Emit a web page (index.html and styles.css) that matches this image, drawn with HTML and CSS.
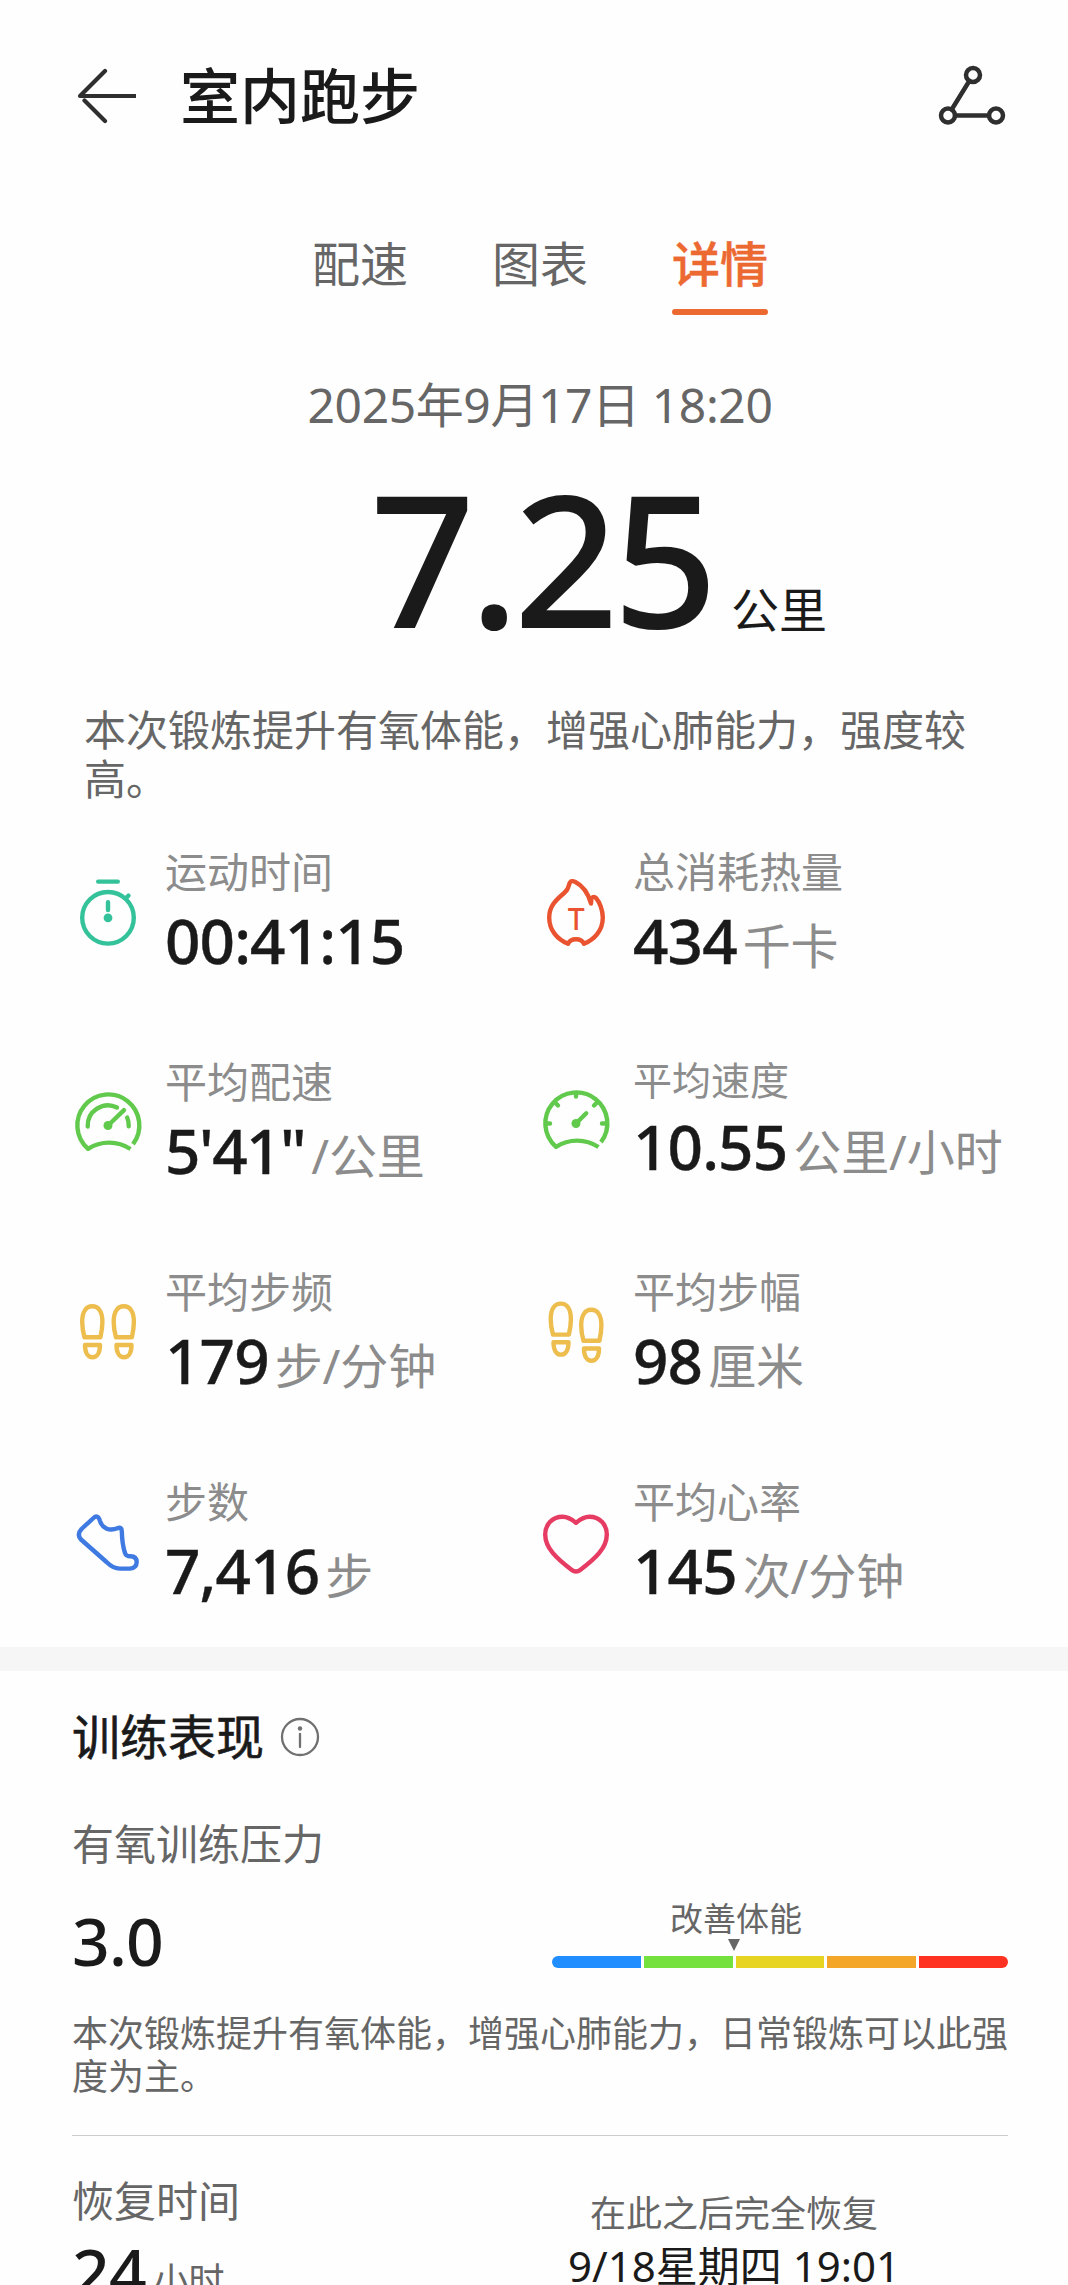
FILE: index.html
```html
<!DOCTYPE html>
<html lang="zh-CN">
<head>
  <meta charset="UTF-8" />
  <meta name="viewport" content="width=device-width, initial-scale=1.0" />
  <title>室内跑步</title>
  <link rel="stylesheet" href="styles.css">
</head>
<body>

  <!-- Header -->
  <header class="header">
    <svg class="back" viewBox="0 0 64 64"><path d="M33 7 8.500 31.500M8 32H63M12.500 36.500 33 57" /></svg>
    <h1 class="title">室内跑步</h1>
    <svg class="share" viewBox="0 0 72 72">
      <circle cx="37" cy="15" r="7" /><circle cx="12" cy="55.500" r="7" /><circle cx="60" cy="55.500" r="7" />
      <path d="M33.300 21 15.700 49.500M19 55.500H53" />
    </svg>
  </header>

  <nav class="tabs">
    <div class="tab">配速</div>
    <div class="tab">图表</div>
    <div class="tab active">详情</div>
  </nav>

  <!-- Summary -->
  <div class="date">2025年9月17日 18:20</div>
  <div class="distance">
    <span class="distance-num">7.25</span>
    <span class="distance-unit">公里</span>
  </div>
  <p class="summary">本次锻炼提升有氧体能，增强心肺能力，强度较高。</p>

  <!-- Stats -->
  <div class="stats">
    <div class="stat">
      <svg class="icon teal" viewBox="0 0 72 72">
        <circle cx="36" cy="41.800" r="25.800" />
        <path d="M26.200 5.600H45.800M54 22 56.500 19.700M36 26.200V34" />
        <circle class="fill" cx="36" cy="41.800" r="4.400" />
      </svg>
      <div>
        <div class="label">运动时间</div>
        <div class="value">00:41:15</div>
      </div>
    </div>
    <div class="stat">
      <svg class="icon red" viewBox="0 0 72 72">
        <path d="M31.700 5.200C28.800 5.800 29.500 9.500 27.200 13.500C23.500 19.500 9.200 25.500 9.200 41.500C9.200 54.500 17.500 63.500 28 67.800C29.500 64.500 32 63.200 36 63.200S42.500 64.500 44 67.800C54.500 63.500 62.800 54.500 62.800 41.500C62.800 34 59.500 26 56 22C54.200 20 51.500 20.800 51.300 23.500L51 27.500C48.500 18.500 43.500 10 35 5.800Q33.200 4.800 31.700 5.200Z" />
        <text x="36.300" y="53.500">T</text>
      </svg>
      <div>
        <div class="label">总消耗热量</div>
        <div class="value">434<span class="unit">千卡</span></div>
      </div>
    </div>
    <div class="stat">
      <svg class="icon green" viewBox="0 0 72 72">
        <path class="flat" d="M61 58.200A31 31 0 1 0 16 62.800A39 39 0 0 1 58.500 63" />
        <path d="M15.700 40.500A20.300 20.300 0 0 1 45 21.500M36 39.500 52 24.200M55.200 31.500Q56.700 35 56.700 40.200" />
        <circle class="fill" cx="36" cy="39.500" r="4.500" />
      </svg>
      <div>
        <div class="label">平均配速</div>
        <div class="value pace">5'41"<span class="unit">/公里</span></div>
      </div>
    </div>
    <div class="stat">
      <svg class="icon green" viewBox="0 0 72 72">
        <path class="flat" d="M61 58.200A31 31 0 1 0 16 62.800A39 39 0 0 1 58.500 63" />
        <path d="M6 39.500H10M62 39.500H66M36 10V12.500M16 19.500 18 21.500M56 19.500 54 21.500M36 39.500 46.200 29.300" />
        <circle class="fill" cx="36" cy="39.500" r="4.500" />
      </svg>
      <div>
        <div class="label small">平均速度</div>
        <div class="value">10.55<span class="unit">公里/小时</span></div>
      </div>
    </div>
    <div class="stat">
      <svg class="icon yellow" viewBox="0 0 72 72">
        <g id="shoe">
          <path d="M12.500 41.300C11 36 10.200 31 10.200 26C10.200 16 14 10.300 20.300 10.300S30.400 16 30.400 26C30.400 31 29.600 36 28.400 41.300Z" />
          <path d="M13 49H28C28 57 25 61.300 20.500 61.300S13 57 13 49Z" />
        </g>
        <use href="#shoe" x="31.500" />
      </svg>
      <div>
        <div class="label">平均步频</div>
        <div class="value">179<span class="unit">步/分钟</span></div>
      </div>
    </div>
    <div class="stat">
      <svg class="icon yellow" viewBox="0 0 72 72">
        <use href="#shoe" x="0.500" y="-2.700" />
        <use href="#shoe" x="31" y="3.500" />
      </svg>
      <div>
        <div class="label">平均步幅</div>
        <div class="value">98<span class="unit">厘米</span></div>
      </div>
    </div>
    <div class="stat">
      <svg class="icon blue" viewBox="0 0 72 72">
        <path d="M21.500 12 9.500 23Q4.500 28.500 9 33.500L34.500 56Q41 62.500 48 62.600H58Q64.500 62 64.700 56Q64.500 50.500 58.500 50.300C55.500 50.300 54 50 53 47C51 41 50 34 49.800 25C49.700 22 48.500 21.200 45.500 22.200C37 25.500 30 22 27.800 14.500C26.800 10.500 24.300 9.300 21.500 12Z" />
      </svg>
      <div>
        <div class="label">步数</div>
        <div class="value">7,416<span class="unit">步</span></div>
      </div>
    </div>
    <div class="stat">
      <svg class="icon pink" viewBox="0 0 72 72">
        <path d="M36 16.800C31.500 12.800 27.500 10.700 22.500 10.700C12.500 10.700 5.200 18.500 5.200 28.500C5.200 42 16.500 52.500 31.500 63.800Q36 67.400 40.500 63.800C55.500 52.500 66.800 42 66.800 28.500C66.800 18.500 59.500 10.700 49.500 10.700C44.500 10.700 40.500 12.800 36 16.800Z" />
      </svg>
      <div>
        <div class="label">平均心率</div>
        <div class="value">145<span class="unit">次/分钟</span></div>
      </div>
    </div>
  </div>

  <div class="band"></div>

  <!-- Training performance -->
  <section class="training">
    <div class="training-head">
      <h2>训练表现</h2>
      <svg class="info" viewBox="0 0 40 40"><circle cx="20" cy="20" r="18" /><path d="M20 17V30" /><circle class="dot" cx="20" cy="11.500" r="2.200" /></svg>
    </div>
    <div class="sub">有氧训练压力</div>
    <div class="load">
      <div class="score">3.0</div>
      <div class="gauge">
        <div class="gauge-label">改善体能</div>
        <svg class="pointer" viewBox="0 0 12 12"><path d="M0 0H12L6 12Z" /></svg>
        <div class="gauge-bar">
          <i class="c1"></i><i class="c2"></i><i class="c3"></i><i class="c4"></i><i class="c5"></i>
        </div>
      </div>
    </div>
    <p class="note">本次锻炼提升有氧体能，增强心肺能力，日常锻炼可以此强度为主。</p>

    <div class="recovery">
      <div>
        <div class="sub">恢复时间</div>
        <div class="score">24<span class="hours">小时</span></div>
      </div>
      <div class="until">
        <div class="until-label">在此之后完全恢复</div>
        <div class="until-date">9/18星期四 19:01</div>
      </div>
    </div>
  </section>

</body>
</html>
```
FILE: styles.css
```css
* {
  margin: 0;
  padding: 0;
  box-sizing: border-box;
}

body {
  width: 1068px;
  height: 2285px;
  padding-top: 56px;
  overflow: hidden;
  background: #fefefe;
  color: #1a1a1a;
  font-family: "Noto Sans", "Noto Sans CJK SC", sans-serif;
}

svg {
  display: block;
  flex-shrink: 0;
  fill: none;
  stroke-linecap: round;
  stroke-linejoin: round;
}

/* Header */
.header {
  display: flex;
  align-items: center;
  height: 80px;
  padding: 0 60px 0 72px;
}

.back {
  width: 64px;
  height: 64px;
  stroke: #2f2f2f;
  stroke-width: 4.2;
}

.title {
  flex: 1;
  margin-left: 44px;
  font-size: 60px;
  font-weight: 500;
  line-height: 82px;
}

.share {
  width: 72px;
  height: 72px;
  stroke: #2f2f2f;
  stroke-width: 4.5;
}

/* Tabs */
.tabs {
  display: flex;
  justify-content: center;
  gap: 84px;
  margin: 98px 60px 0 72px;
}

.tab {
  font-size: 48px;
  line-height: 60px;
  color: #666;
}

.tab.active {
  color: #ec6a32;
  font-weight: 500;
  -webkit-text-stroke: 0.4px #ec6a32;
}

.tab.active::after {
  content: "";
  display: block;
  height: 6px;
  margin-top: 15px;
  border-radius: 3px;
  background: #ec6a32;
}

/* Summary */
.date {
  margin: 60px 60px 0 72px;
  text-align: center;
  font-size: 48px;
  line-height: 60px;
  letter-spacing: -0.4px;
  color: #666;
}

.distance {
  display: grid;
  grid-template-columns: 1fr auto 1fr;
  align-items: baseline;
  margin: 22px 60px 0 72px;
}

.distance-num {
  grid-column: 2;
  padding-left: 2px;
  font-size: 184px;
  font-weight: 500;
  line-height: 200px;
  letter-spacing: -6px;
}

.distance-unit {
  padding-left: 19px;
  font-size: 48px;
  line-height: 60px;
}

.summary {
  width: 900px;
  margin: 48px 0 0 84px;
  font-size: 42px;
  line-height: 49px;
  color: #666;
}

/* Stats */
.stats {
  display: grid;
  grid-template-columns: 468px 1fr;
  align-items: start;
  row-gap: 81px;
  margin: 44px 0 41px 72px;
}

.stat {
  display: flex;
  align-items: center;
  gap: 21px;
  white-space: nowrap;
}

.icon {
  width: 72px;
  height: 72px;
  stroke: currentColor;
  stroke-width: 4.4;
}

.icon .fill {
  fill: currentColor;
  stroke: none;
}

.icon .flat {
  stroke-linecap: butt;
}

.icon text {
  fill: currentColor;
  stroke: none;
  font-size: 30px;
  font-weight: 500;
  text-anchor: middle;
}

.teal { color: #34c29a; }
.red { color: #e9532f; }
.green { color: #61ca4c; }
.yellow { color: #edbd4e; }
.blue { color: #3f7ae2; }
.pink { color: #e63b62; }

.label {
  font-size: 42px;
  line-height: 50px;
  color: #8c8c8c;
}

.label.small {
  font-size: 39px;
  line-height: 46px;
}

.value {
  margin-top: 7px;
  font-size: 62px;
  font-weight: 500;
  line-height: 72px;
  letter-spacing: -0.9px;
  -webkit-text-stroke: 0.4px;
}

.value.pace {
  letter-spacing: -1.5px;
}

.unit {
  margin-left: 6px;
  font-size: 48px;
  font-weight: 400;
  line-height: 1;
  letter-spacing: -0.1px;
  -webkit-text-stroke: 0;
  color: #8c8c8c;
}

.band {
  height: 24px;
  background: #f6f6f6;
}

/* Training performance */
.training {
  width: 936px;
  margin: 36px 0 0 72px;
}

.training-head {
  display: flex;
  align-items: center;
  gap: 16px;
  margin-bottom: 52px;
}

.training-head h2 {
  font-size: 48px;
  font-weight: 400;
  line-height: 60px;
  -webkit-text-stroke: 0.6px;
}

.info {
  width: 40px;
  height: 40px;
  stroke: #707070;
  stroke-width: 2.3;
}

.info .dot {
  fill: #707070;
  stroke: none;
}

.sub {
  font-size: 42px;
  line-height: 50px;
  color: #666;
}

.load {
  display: flex;
  justify-content: space-between;
  margin-top: 31px;
}

.score {
  font-size: 66px;
  font-weight: 500;
  line-height: 80px;
  letter-spacing: -0.8px;
}

.gauge {
  width: 456px;
}

.gauge-label {
  margin-left: 118px;
  font-size: 33px;
  line-height: 37px;
  color: #666;
}

.pointer {
  width: 12px;
  height: 12px;
  margin: 2px 0 5px 176px;
  fill: #666;
}

.gauge-bar {
  display: flex;
  gap: 3px;
  height: 12px;
  border-radius: 6px;
  overflow: hidden;
}

.gauge-bar i {
  flex: 1;
}

.c1 { background: #208eff; }
.c2 { background: #74e13e; }
.c3 { background: #e7d422; }
.c4 { background: #f3a628; }
.c5 { background: #ff3222; }

.note {
  margin-top: 33px;
  font-size: 36px;
  line-height: 42.500px;
  color: #666;
}

.recovery {
  display: flex;
  justify-content: space-between;
  margin-top: 37px;
  padding-top: 40px;
  border-top: 1px solid #ccc;
}

.recovery .score {
  margin-top: 5px;
}

.hours {
  margin-left: 7px;
  font-size: 36px;
  font-weight: 400;
  line-height: 1;
  letter-spacing: -0.5px;
  vertical-align: 3px;
  color: #666;
}

.until {
  width: 548px;
  padding-top: 16px;
  text-align: center;
}

.until-label {
  font-size: 36px;
  line-height: 44px;
  color: #666;
}

.until-date {
  margin-top: 5px;
  font-size: 42px;
  line-height: 50px;
}
```
